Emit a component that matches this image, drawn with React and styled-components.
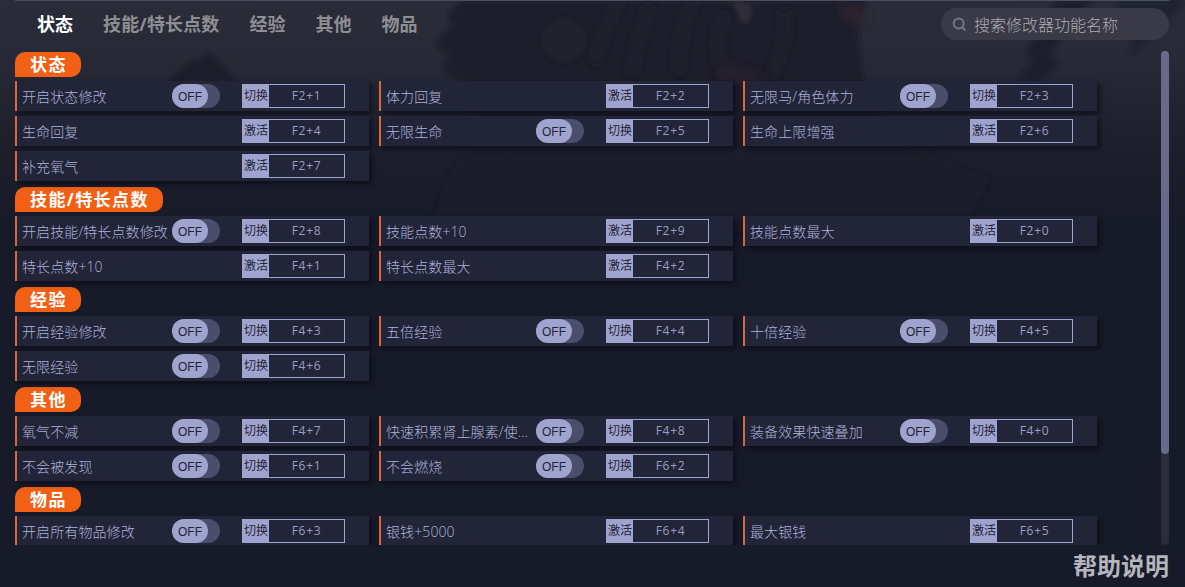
import React from 'react'
import styled, { createGlobalStyle } from 'styled-components'

const GlobalStyle = createGlobalStyle`
  * {
    box-sizing: border-box;
  }
  body {
    margin: 0;
    background: #171a28;
    font-family: 'Open Sans', 'Noto Sans CJK SC', sans-serif;
    overflow: hidden;
  }
`

const Page = styled.div`
  position: relative;
  width: 1185px;
  height: 587px;
  overflow: hidden;
  background: linear-gradient(#2a2c39 0, #272936 60px, #212330 110px, #1b1d2b 165px, #171a28 230px, #171a28 100%);
`
const Backdrop = styled.svg`
  position: absolute;
  top: 0;
  left: 0;
`
const Content = styled.div`
  position: relative;
  display: flex;
  flex-direction: column;
  height: 100%;
  padding-left: 15px;
`
const Header = styled.header`
  display: flex;
  justify-content: space-between;
  height: 52px;
  margin-right: 16px;
  border-top: 1px solid #4b4d60;
`
const Tabs = styled.nav`
  display: flex;
  gap: 30px;
  padding: 8px 0 0 22px;
`
const Tab = styled.a`
  font-size: 18px;
  line-height: 30px;
  font-weight: bold;
  white-space: nowrap;
  color: ${props => (props.$active ? '#ffffff' : '#8e8e93')};
  &:nth-child(2) {
    letter-spacing: 0.15px;
  }
`
const Search = styled.div`
  display: flex;
  align-items: center;
  width: 228px;
  height: 32px;
  margin-top: 7px;
  padding-left: 11px;
  border-radius: 16px;
  background: #393947;
  color: #adadb0;
  font-size: 16px;
  font-weight: 300;
  white-space: nowrap;
`
const SearchIcon = styled.svg`
  margin-right: 7px;
`
const Body = styled.div`
  display: flex;
  justify-content: space-between;
  height: 493px;
  padding-right: 16px;
`
const List = styled.div`
  width: 1100px;
  overflow: hidden;
`
const Section = styled.section`
  padding-bottom: 6px;
`
const SectionTag = styled.div`
  width: fit-content;
  height: 25px;
  margin-bottom: 4px;
  padding: 0 14px 0 15px;
  border-radius: 10px 10px 10px 0;
  background: #f26015;
  color: #ffffff;
  font-size: 17px;
  line-height: 25px;
  font-weight: bold;
  letter-spacing: 1.4px;
`
const Grid = styled.div`
  display: grid;
  grid-template-columns: repeat(3, 354px);
  gap: 5px 10px;
`
const Card = styled.div`
  display: flex;
  align-items: center;
  height: 30px;
  padding-left: 5px;
  border-left: 2px solid #d9673f;
  background: #222437;
  box-shadow: 3px 3px 5px rgba(8, 9, 18, 0.65);
`
const Name = styled.div`
  width: 150px;
  padding-top: 1px;
  color: #afb2da;
  font-size: 14px;
  line-height: 28px;
  font-weight: 300;
  letter-spacing: 0.1px;
  white-space: nowrap;
`
const ToggleSlot = styled.div`
  width: 70px;
`
const Toggle = styled.div`
  width: 48px;
  height: 24px;
  border-radius: 12px;
  background: #4b4e6b;
`
const Knob = styled.div`
  width: 36px;
  height: 24px;
  border-radius: 12px;
  background: #9fa4cf;
  color: #222437;
  font-family: 'Liberation Sans', sans-serif;
  font-size: 12px;
  line-height: 26px;
  text-align: center;
`
const Hotkey = styled.div`
  display: flex;
  width: 103px;
  height: 24px;
  border: 1px solid #9fa4cf;
  line-height: 22px;
`
const Action = styled.div`
  width: 26px;
  background: #9fa4cf;
  color: #222437;
  font-size: 12px;
  font-weight: 400;
  text-align: center;
  white-space: nowrap;
`
const Keys = styled.div`
  flex: 1;
  color: #9a9dc2;
  font-size: 12px;
  letter-spacing: 0.7px;
  text-align: center;
`
const Track = styled.div`
  width: 8px;
  height: 494px;
  margin-top: -1px;
  border-radius: 4px;
  background: #2a2b3f;
`
const Thumb = styled.div`
  height: 403px;
  border-radius: 4px;
  background: #676a89;
`
const Help = styled.a`
  align-self: flex-end;
  margin-right: 16px;
  color: #b4b5bd;
  font-size: 24px;
  line-height: 41px;
  font-weight: bold;
`

const sections = [
  {
    title: '状态',
    items: [
      { name: '开启状态修改', keys: 'F2+1', toggle: true },
      { name: '体力回复', keys: 'F2+2' },
      { name: '无限马/角色体力', keys: 'F2+3', toggle: true },
      { name: '生命回复', keys: 'F2+4' },
      { name: '无限生命', keys: 'F2+5', toggle: true },
      { name: '生命上限增强', keys: 'F2+6' },
      { name: '补充氧气', keys: 'F2+7' },
    ],
  },
  {
    title: '技能/特长点数',
    items: [
      { name: '开启技能/特长点数修改', keys: 'F2+8', toggle: true },
      { name: '技能点数+10', keys: 'F2+9' },
      { name: '技能点数最大', keys: 'F2+0' },
      { name: '特长点数+10', keys: 'F4+1' },
      { name: '特长点数最大', keys: 'F4+2' },
    ],
  },
  {
    title: '经验',
    items: [
      { name: '开启经验修改', keys: 'F4+3', toggle: true },
      { name: '五倍经验', keys: 'F4+4', toggle: true },
      { name: '十倍经验', keys: 'F4+5', toggle: true },
      { name: '无限经验', keys: 'F4+6', toggle: true },
    ],
  },
  {
    title: '其他',
    items: [
      { name: '氧气不减', keys: 'F4+7', toggle: true },
      { name: '快速积累肾上腺素/使...', keys: 'F4+8', toggle: true },
      { name: '装备效果快速叠加', keys: 'F4+0', toggle: true },
      { name: '不会被发现', keys: 'F6+1', toggle: true },
      { name: '不会燃烧', keys: 'F6+2', toggle: true },
    ],
  },
  {
    title: '物品',
    items: [
      { name: '开启所有物品修改', keys: 'F6+3', toggle: true },
      { name: '银钱+5000', keys: 'F6+4' },
      { name: '最大银钱', keys: 'F6+5' },
    ],
  },
]

const Item = ({ name, keys, toggle }) => (
  <Card>
    <Name>{name}</Name>
    <ToggleSlot>
      {toggle && <Toggle><Knob>OFF</Knob></Toggle>}
    </ToggleSlot>
    <Hotkey>
      <Action>{toggle ? '切换' : '激活'}</Action>
      <Keys>{keys}</Keys>
    </Hotkey>
  </Card>
)

// dim game artwork behind the list
const Artwork = () => (
  <Backdrop width="1185" height="260">
    <defs>
      <filter id="soft" x="-10%" y="-10%" width="120%" height="120%">
        <feGaussianBlur stdDeviation="2" />
      </filter>
      <filter id="softer" x="-40%" y="-40%" width="180%" height="180%">
        <feGaussianBlur stdDeviation="5" />
      </filter>
    </defs>
    <path d="M166 83 L192 60 L199 61 L210 53 L238 83 Z" fill="#1a1c2a" filter="url(#soft)" />
    <path d="M462 0 L448 14 L452 24 L436 42 L442 52 L450 56 L443 66 L452 77 L474 84 L466 150 L446 180 L430 230 L960 230 L990 180 L900 140 L862 80 L858 30 L866 0 Z" fill="#1a1c29" filter="url(#soft)" opacity="0.85" />
    <ellipse cx="564" cy="40" rx="22" ry="22" fill="#20212d" filter="url(#soft)" />
    <g fill="none" stroke="#24242f" strokeWidth="7" filter="url(#softer)">
      <path d="M620 0 Q600 34 596 64 M650 6 Q636 40 632 76 M694 0 Q676 34 680 72 M724 14 Q712 44 724 76 M784 10 Q790 40 770 76" />
    </g>
    <path d="M732 0 L752 4 L750 22 L742 24 Z" fill="#3e383f" filter="url(#soft)" opacity="0.6" />
    <path d="M838 4 L866 10 L866 24 L848 22 Z" fill="#34272f" filter="url(#softer)" opacity="0.8" />
    <path d="M728 64 L764 76 L764 82 L716 82 Z" fill="#2b242e" filter="url(#softer)" opacity="0.8" />
    <path d="M1056 0 L1092 0 L1060 40 L1050 54 L1058 66 L1040 80 L1016 82 L1032 62 L1026 54 Z" fill="#1b1e2d" filter="url(#soft)" opacity="0.85" />
    <path d="M1116 0 L1185 0 L1170 20 L1128 58 L1134 38 Z" fill="#1b2032" filter="url(#soft)" opacity="0.8" />
  </Backdrop>
)

const App = () => (
  <>
    <GlobalStyle />
    <Page>
      <Artwork />
      <Content>
        <Header>
          <Tabs>
            {sections.map((s, i) => (
              <Tab key={s.title} $active={i === 0}>{s.title}</Tab>
            ))}
          </Tabs>
          <Search>
            <SearchIcon width="15" height="15" viewBox="0 0 15 15" fill="none" stroke="#74758f" strokeWidth="2">
              <circle cx="6.7" cy="6.5" r="5" />
              <path d="M10.4 10.4 L13 13" strokeLinecap="round" />
            </SearchIcon>
            搜索修改器功能名称
          </Search>
        </Header>
        <Body>
          <List>
            {sections.map(s => (
              <Section key={s.title}>
                <SectionTag>{s.title}</SectionTag>
                <Grid>
                  {s.items.map(item => <Item key={item.keys} {...item} />)}
                </Grid>
              </Section>
            ))}
          </List>
          <Track><Thumb /></Track>
        </Body>
        <Help>帮助说明</Help>
      </Content>
    </Page>
  </>
)

export default App
